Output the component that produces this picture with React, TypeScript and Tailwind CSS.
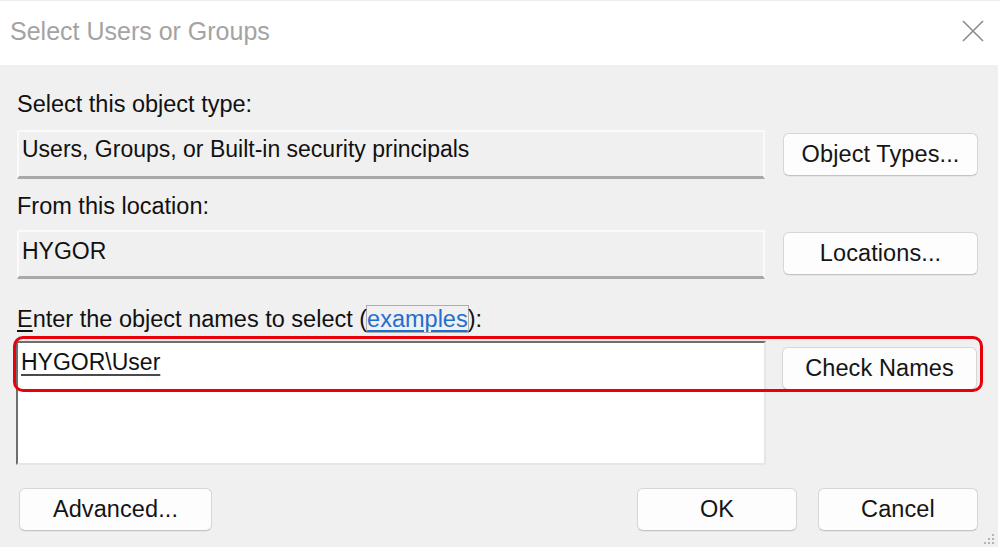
const font = { fontFamily: '"Liberation Sans", Arial, sans-serif' };

const DialogButton: React.FC<{ label: string; className?: string }> = ({ label, className = "" }) => (
    <button
        className={`h-[43px] rounded-[6px] border border-[#d6d6d6] border-b-[#c4c4c4] bg-[#fdfdfd] text-[23.5px] tracking-[0.1px] text-[#151515] shadow-[0_1px_0_rgba(0,0,0,0.04)] ${className}`}
    >
        {label}
    </button>
);

const Grip = () => (
    <svg width="14" height="14" viewBox="0 0 14 14" className="absolute bottom-[1px] right-[3px]">
        <rect x="11" y="2" width="2" height="2" fill="#b4b4b4" />
        <rect x="7" y="6" width="2" height="2" fill="#b4b4b4" />
        <rect x="11" y="6" width="2" height="2" fill="#b4b4b4" />
        <rect x="3" y="10" width="2" height="2" fill="#b4b4b4" />
        <rect x="7" y="10" width="2" height="2" fill="#b4b4b4" />
        <rect x="11" y="10" width="2" height="2" fill="#b4b4b4" />
    </svg>
);

export default function App() {
    return (
        <div className="w-[1000px] h-[549px] bg-white flex flex-col overflow-hidden" style={font}>
            {/* title bar */}
            <div className="h-[65px] shrink-0 flex items-center justify-between pl-[10px] pr-[16px] border-t border-[#ececec]">
                <span className="text-[25px] text-[#a3a3a3] tracking-[0px] leading-none mt-[-3px]">Select Users or Groups</span>
                <svg width="22" height="22" viewBox="0 0 22 22" className="mt-[-4px]">
                    <path d="M1 1 L21 21 M21 1 L1 21" stroke="#8c8c8c" strokeWidth="1.6" />
                </svg>
            </div>

            {/* body */}
            <div className="relative flex-1 mr-[2px] mb-[2px] bg-[#f0f0f0] pl-[17px] pr-[20px] flex flex-col text-[#111]">
                <div className="mt-[26px] text-[23.5px] leading-[27px]">Select this object type:</div>
                <div className="mt-[12px] flex items-start gap-[18px]">
                    <div className="w-[748px] h-[49px] border-2 border-[#fafafa] border-b-[3px] border-b-[#a9a9a9] px-[3px] pt-[4px] text-[23px] leading-[27px]">
                        Users, Groups, or Built-in security principals
                    </div>
                    <DialogButton label="Object Types..." className="w-[195px] mt-[3px]" />
                </div>

                <div className="mt-[14px] text-[23.5px] leading-[27px]">From this location:</div>
                <div className="mt-[10px] flex items-start gap-[18px]">
                    <div className="w-[748px] h-[49px] border-2 border-[#fafafa] border-b-[3px] border-b-[#a9a9a9] px-[3px] pt-[6px] text-[23px] leading-[27px]">
                        HYGOR
                    </div>
                    <DialogButton label="Locations..." className="w-[195px] mt-[2px]" />
                </div>

                <div className="mt-[27px] text-[23.5px] leading-[27px]">
                    <span className="underline underline-offset-[3px]">E</span>nter the object names to select (
                    <span className="text-[#1f6fcf] underline underline-offset-[3px] outline outline-1 outline-[#6a6a6a]/50">examples</span>
                    ):
                </div>
                <div className="relative mt-[8px] flex items-start gap-[18px]">
                    <div className="w-[750px] h-[124px] ml-[-1px] border-2 border-t-[#6e6e6e] border-l-[#6e6e6e] border-r-[#e6e6e6] border-b-[#e6e6e6] bg-white px-[3px] pt-[6px] text-[23px] leading-[27px]">
                        <span className="underline underline-offset-[4px] decoration-[#4a4a4a]">HYGOR\User</span>
                    </div>
                    <DialogButton label="Check Names" className="w-[195px] mt-[6px] ml-[-2px]" />
                    <div className="absolute left-[-4px] top-[-5px] w-[970px] h-[56px] border-[3px] border-[#e8000b] rounded-[10px] pointer-events-none" />
                </div>

                <div className="mt-[23px] flex items-start">
                    <DialogButton label="Advanced..." className="w-[193px] ml-[2px]" />
                    <div className="flex-1" />
                    <DialogButton label="OK" className="w-[160px]" />
                    <DialogButton label="Cancel" className="w-[160px] ml-[21px]" />
                </div>
                <Grip />
            </div>
        </div>
    );
}
